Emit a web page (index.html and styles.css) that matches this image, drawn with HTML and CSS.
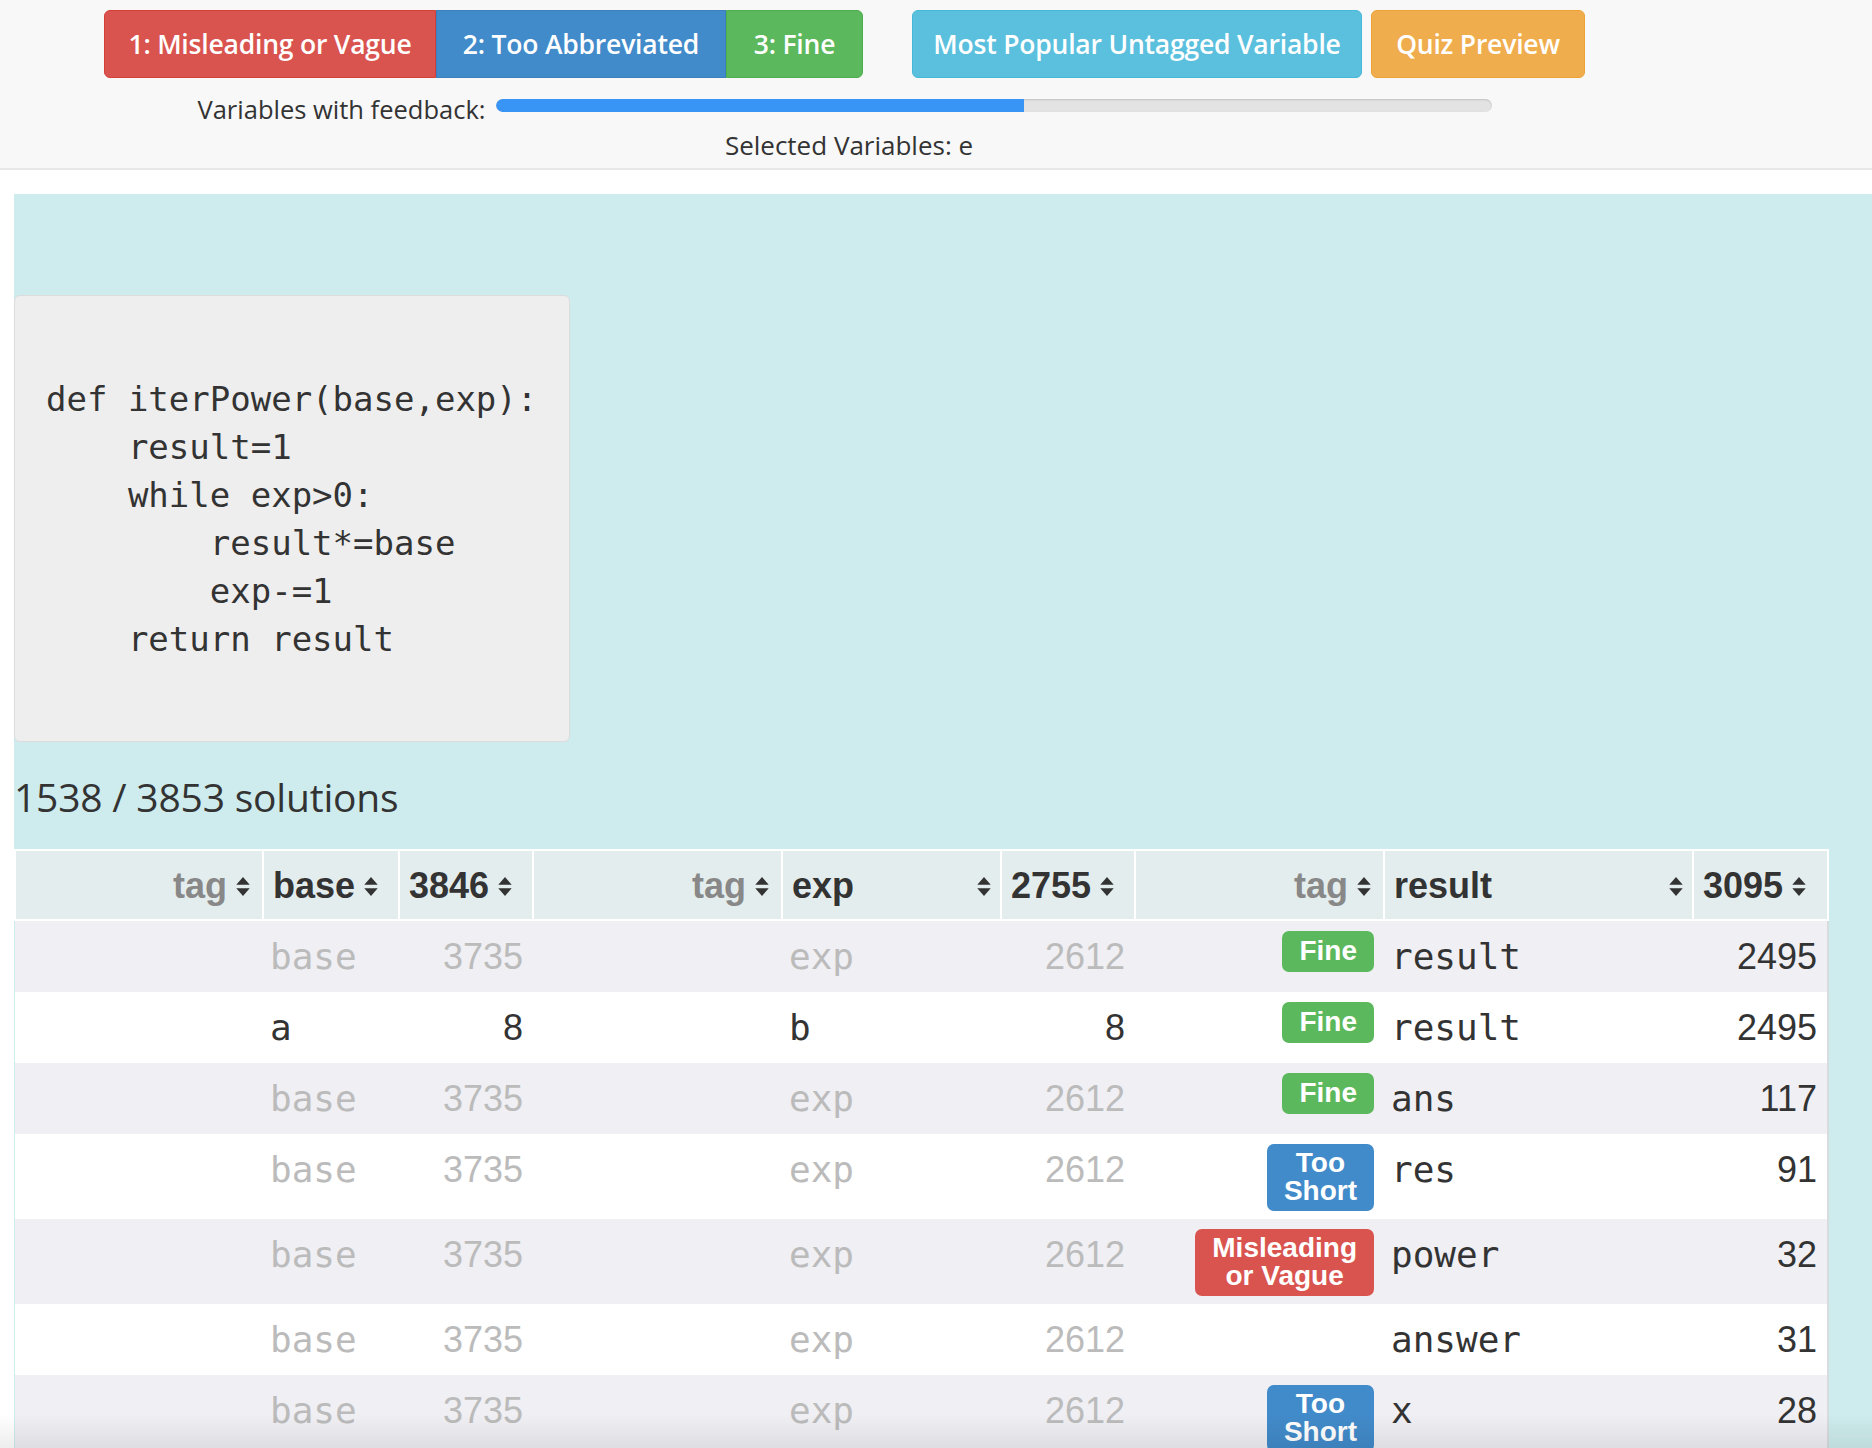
FILE: index.html
```html
<!DOCTYPE html>
<html>
<head>
<meta charset="utf-8">
<link rel="stylesheet" href="styles.css">
</head>
<body>
<header class="topbar">
  <div class="topbar-inner">
    <div class="btn-row">
      <div class="btn-group">
        <button class="btn btn-red">1: Misleading or Vague</button>
        <button class="btn btn-blue">2: Too Abbreviated</button>
        <button class="btn btn-green">3: Fine</button>
      </div>
      <button class="btn btn-cyan single">Most Popular Untagged Variable</button>
      <button class="btn btn-orange single">Quiz Preview</button>
    </div>
    <div class="progress-row">
      <span class="progress-label">Variables with feedback:</span>
      <div class="progress"><div class="progress-fill" style="width:53%"></div></div>
    </div>
    <div class="selected">Selected Variables: e</div>
  </div>
</header>

<main class="main">
  <pre class="code">def iterPower(base,exp):
    result=1
    while exp&gt;0:
        result*=base
        exp-=1
    return result</pre>

  <h3 class="count">1538 / 3853 solutions</h3>

  <table class="grid">
    <colgroup>
      <col class="c-tag1"><col class="c-var1"><col class="c-num">
      <col class="c-tag"><col class="c-var2"><col class="c-num">
      <col class="c-tag"><col class="c-var3"><col class="c-num9">
    </colgroup>
    <thead>
      <tr>
        <th class="th-tag"><span class="th-in end"><span class="muted">tag</span><svg class="sort" viewBox="0 0 12 17"><path d="M0 7 L6 0 L12 7 Z M0 10 L6 17 L12 10 Z"/></svg></span></th>
        <th><span class="th-in"><span>base</span><svg class="sort" viewBox="0 0 12 17"><path d="M0 7 L6 0 L12 7 Z M0 10 L6 17 L12 10 Z"/></svg></span></th>
        <th><span class="th-in"><span>3846</span><svg class="sort" viewBox="0 0 12 17"><path d="M0 7 L6 0 L12 7 Z M0 10 L6 17 L12 10 Z"/></svg></span></th>
        <th class="th-tag"><span class="th-in end"><span class="muted">tag</span><svg class="sort" viewBox="0 0 12 17"><path d="M0 7 L6 0 L12 7 Z M0 10 L6 17 L12 10 Z"/></svg></span></th>
        <th><span class="th-in"><span>exp</span><svg class="sort push" viewBox="0 0 12 17"><path d="M0 7 L6 0 L12 7 Z M0 10 L6 17 L12 10 Z"/></svg></span></th>
        <th><span class="th-in"><span>2755</span><svg class="sort" viewBox="0 0 12 17"><path d="M0 7 L6 0 L12 7 Z M0 10 L6 17 L12 10 Z"/></svg></span></th>
        <th class="th-tag"><span class="th-in end"><span class="muted">tag</span><svg class="sort" viewBox="0 0 12 17"><path d="M0 7 L6 0 L12 7 Z M0 10 L6 17 L12 10 Z"/></svg></span></th>
        <th><span class="th-in"><span>result</span><svg class="sort push" viewBox="0 0 12 17"><path d="M0 7 L6 0 L12 7 Z M0 10 L6 17 L12 10 Z"/></svg></span></th>
        <th><span class="th-in"><span>3095</span><svg class="sort" viewBox="0 0 12 17"><path d="M0 7 L6 0 L12 7 Z M0 10 L6 17 L12 10 Z"/></svg></span></th>
      </tr>
    </thead>
    <tbody>
      <tr>
        <td></td><td class="var faded">base</td><td class="num faded">3735</td>
        <td></td><td class="var faded">exp</td><td class="num faded">2612</td>
        <td class="tag"><span class="label l-fine">Fine</span></td><td class="var">result</td><td class="num">2495</td>
      </tr>
      <tr>
        <td></td><td class="var">a</td><td class="num">8</td>
        <td></td><td class="var">b</td><td class="num">8</td>
        <td class="tag"><span class="label l-fine">Fine</span></td><td class="var">result</td><td class="num">2495</td>
      </tr>
      <tr>
        <td></td><td class="var faded">base</td><td class="num faded">3735</td>
        <td></td><td class="var faded">exp</td><td class="num faded">2612</td>
        <td class="tag"><span class="label l-fine">Fine</span></td><td class="var">ans</td><td class="num">117</td>
      </tr>
      <tr>
        <td></td><td class="var faded">base</td><td class="num faded">3735</td>
        <td></td><td class="var faded">exp</td><td class="num faded">2612</td>
        <td class="tag"><span class="label l-short">Too<br>Short</span></td><td class="var">res</td><td class="num">91</td>
      </tr>
      <tr>
        <td></td><td class="var faded">base</td><td class="num faded">3735</td>
        <td></td><td class="var faded">exp</td><td class="num faded">2612</td>
        <td class="tag"><span class="label l-vague">Misleading<br>or Vague</span></td><td class="var">power</td><td class="num">32</td>
      </tr>
      <tr>
        <td></td><td class="var faded">base</td><td class="num faded">3735</td>
        <td></td><td class="var faded">exp</td><td class="num faded">2612</td>
        <td class="tag"></td><td class="var">answer</td><td class="num">31</td>
      </tr>
      <tr>
        <td></td><td class="var faded">base</td><td class="num faded">3735</td>
        <td></td><td class="var faded">exp</td><td class="num faded">2612</td>
        <td class="tag"><span class="label l-short">Too<br>Short</span></td><td class="var">x</td><td class="num">28</td>
      </tr>
    </tbody>
  </table>
</main>
<div class="bottom-shade"></div>
</body>
</html>
```

FILE: styles.css
```css
* { box-sizing: border-box; }

html, body {
  margin: 0;
  padding: 0;
  background: #ffffff;
  color: #333333;
  font-family: "Open Sans", "Liberation Sans", sans-serif;
  overflow: hidden;
}

/* ---------- top bar ---------- */
.topbar {
  height: 170px;
  background: #f8f8f8;
  border-bottom: 2px solid #e7e7e7;
  padding-top: 10px;
}

.topbar-inner {
  margin-left: 104px;
  width: 1490px;
}

.btn-row {
  display: flex;
  align-items: flex-start;
}

.btn-group {
  display: flex;
  margin-right: 49px;
}

.btn {
  height: 68px;
  padding: 0;
  border: 1px solid transparent;
  font-family: "Open Sans", "Liberation Sans", sans-serif;
  font-weight: 600;
  font-size: 26.5px;
  letter-spacing: -0.2px;
  color: #ffffff;
  white-space: nowrap;
  text-align: center;
  border-radius: 0;
  cursor: pointer;
}

.btn-group .btn:first-child { border-radius: 6px 0 0 6px; }
.btn-group .btn:last-child { border-radius: 0 6px 6px 0; }
.btn.single { border-radius: 6px; margin-right: 9px; }

.btn-red { width: 332px; background: #d9534f; border-color: #d43f3a; }
.btn-blue { width: 290px; background: #428bca; border-color: #3b80bd; }
.btn-green { width: 137px; background: #5cb85c; border-color: #4cae4c; }
.btn-cyan { width: 452px; background: #5bc0de; border-color: #46b8da; }
.btn-orange { width: 215px; background: #f0ad4e; border-color: #eea236; }

.progress-row {
  display: flex;
  justify-content: center;
  align-items: flex-start;
  margin-top: 16px;
  padding-right: 8px;
}

.progress-label {
  font-size: 25.5px;
  line-height: 30px;
  margin-right: 11px;
}

.progress {
  width: 996px;
  height: 13px;
  margin-top: 5px;
  border-radius: 7px;
  background: #e3e3e3;
  box-shadow: inset 0 1px 2px rgba(0,0,0,0.15);
  overflow: hidden;
}

.progress-fill {
  height: 100%;
  background: #3895f6;
  border-radius: 7px 0 0 7px;
}

.selected {
  text-align: center;
  font-size: 26px;
  line-height: 30px;
  margin-top: 6px;
}

/* ---------- main ---------- */
.main {
  margin: 24px 0 0 14px;
  background: #ceeced;
  padding-top: 101px;
  min-height: 1300px;
}

.code {
  display: inline-block;
  margin: 0;
  padding: 79px 31px 78px 31px;
  width: 556px;
  background: #eeeeee;
  border: 1px solid #dcdcdc;
  border-radius: 6px;
  font-family: "DejaVu Sans Mono", monospace;
  font-size: 34px;
  line-height: 48px;
  color: #333333;
}

.count {
  margin: 28px 0 0 0;
  font-weight: normal;
  font-size: 39px;
  line-height: 54px;
  letter-spacing: -0.2px;
  color: #333333;
  padding-bottom: 25px;
}

/* ---------- table ---------- */
.grid {
  table-layout: fixed;
  width: 1813px;
  border-collapse: collapse;
  font-family: "Liberation Sans", Arial, sans-serif;
  font-size: 36px;
}

.c-tag1 { width: 248px; }
.c-tag { width: 249px; }
.c-var1 { width: 136px; }
.c-var2 { width: 219px; }
.c-var3 { width: 309px; }
.c-num { width: 134px; }
.c-num9 { width: 135px; }

.grid th {
  background: #e4eded;
  border: 2px solid #ffffff;
  padding: 10px 9px 8px 9px;
  font-weight: bold;
  line-height: 50px;
  text-align: left;
  color: #333333;
}

.th-in {
  display: flex;
  align-items: center;
}

.th-in.end { justify-content: flex-end; padding-right: 3px; }

.muted { color: #888888; }

.sort {
  width: 14px;
  height: 19px;
  margin-left: 9px;
  fill: #333333;
  flex: none;
}

.sort.push { margin-left: auto; }

.grid td {
  padding: 10px;
  line-height: 51px;
  vertical-align: top;
  color: #333333;
  white-space: nowrap;
}

.grid tbody tr:nth-child(odd) td { background: #efeff4; }
.grid tbody tr:nth-child(even) td { background: #ffffff; }
.grid tbody td:last-child { border-right: 2px solid #d9dcdf; }

.grid td.var {
  font-family: "DejaVu Sans Mono", monospace;
  font-size: 36px;
  padding-left: 7px;
}

.grid td.num { text-align: right; }

.grid td.faded { color: #bbbbbb; }

.grid td.tag { text-align: right; padding-bottom: 8px; }

.label {
  display: inline-block;
  vertical-align: top;
  padding: 5px 17px 6px 17px;
  border-radius: 7px;
  font-family: "Liberation Sans", Arial, sans-serif;
  font-weight: bold;
  font-size: 28px;
  line-height: 28px;
  color: #ffffff;
  text-align: center;
  white-space: nowrap;
}

.l-fine { background: #5cb85c; padding-top: 6px; padding-bottom: 7px; }
.l-short { background: #428bca; }
.l-vague { background: #d9534f; }

.bottom-shade {
  position: fixed;
  left: 0;
  right: 0;
  bottom: 0;
  height: 34px;
  background: linear-gradient(to bottom, rgba(0,0,0,0), rgba(0,0,0,0.07));
  pointer-events: none;
}
```
